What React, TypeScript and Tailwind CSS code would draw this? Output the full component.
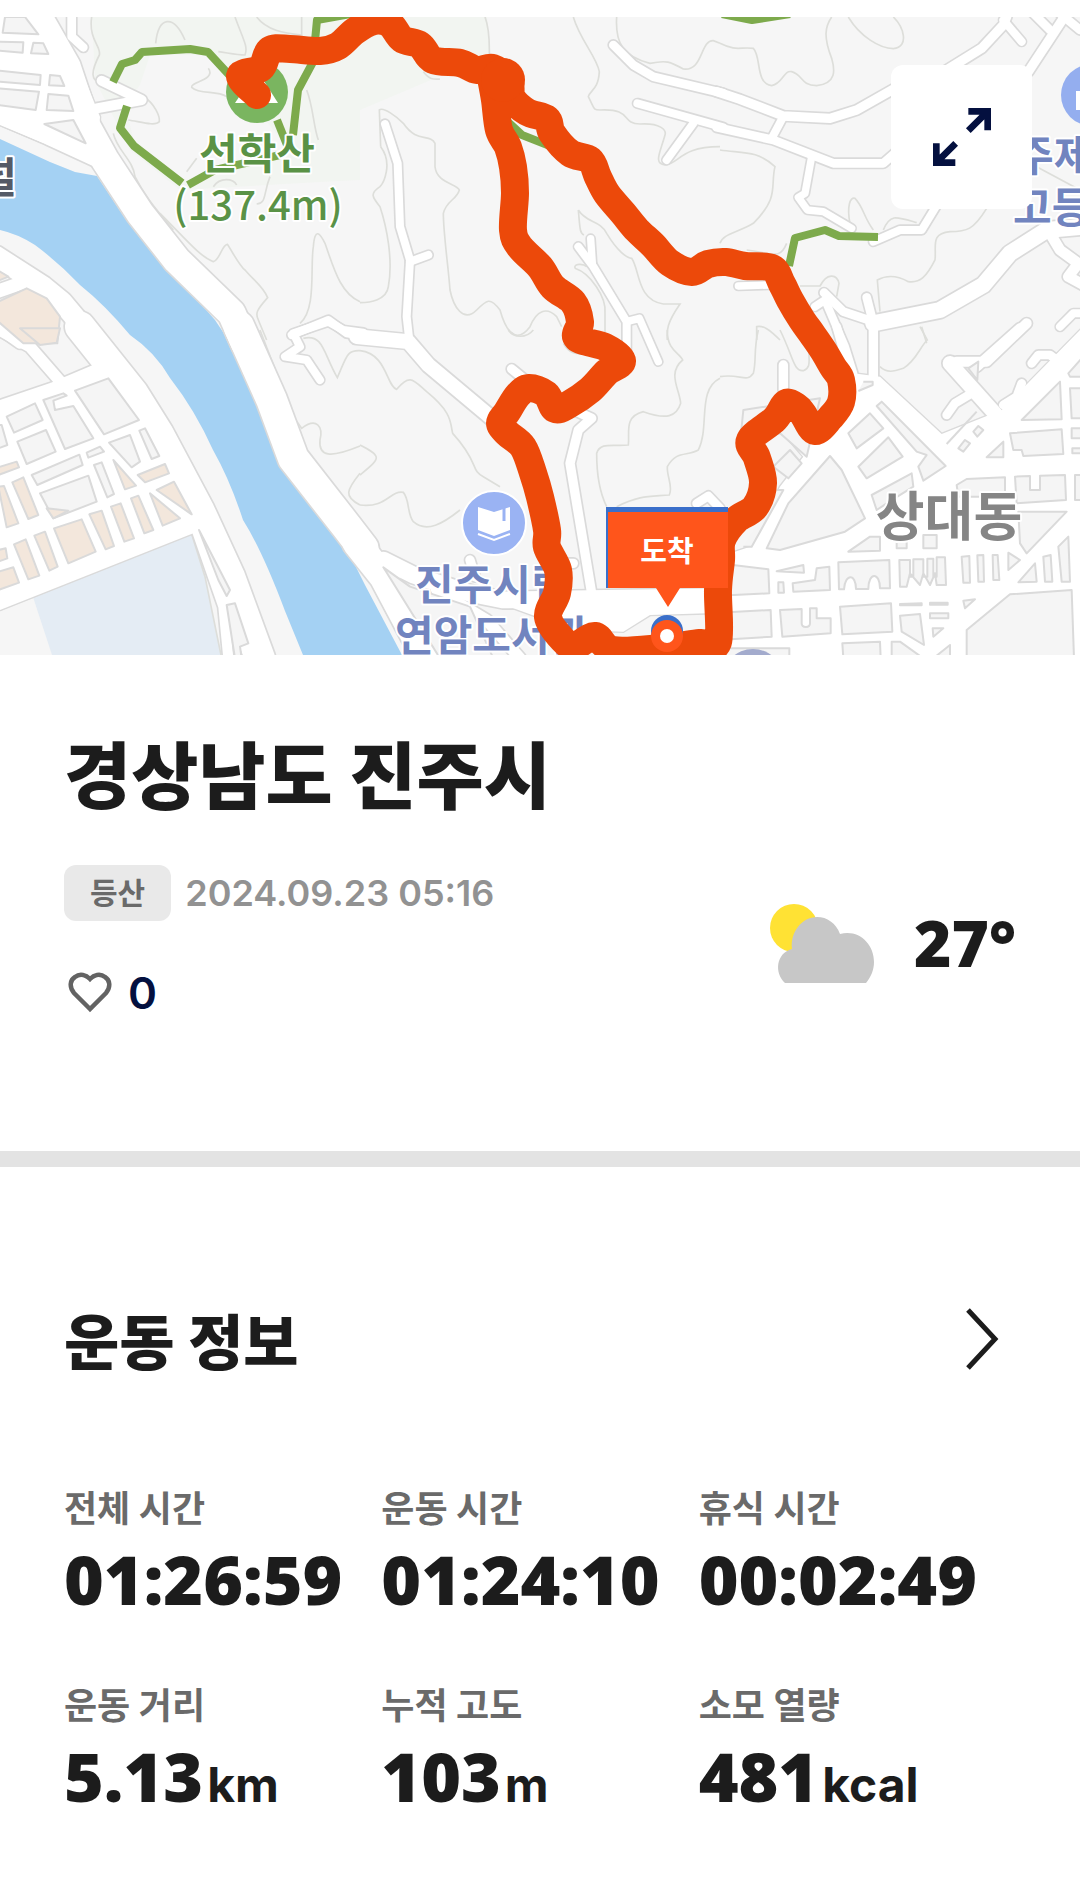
import React from 'react';

interface Road {
  d: string;
  w: number;
}

interface Tile {
  x: number;
  y: number;
  base?: string;
  roads: Road[];
  blocks: string[];
  shops: string[];
  contours: string[];
}

// Each tile is 360px wide on the map, with its own coordinates at three times that size
const tiles: Tile[] = [
  {
    x: 0,
    y: 0,
    base: 'M0 51H155L235 190L300 350L290 495L0 375Z',
    roads: [
      { d: 'M115 51L200 200L260 380L315 480L420 640L530 780L695 940L735 1030', w: 84 },
      { d: 'M0 335L150 400L290 465', w: 70 },
      { d: 'M290 325L425 300L305 242', w: 30 },
      { d: 'M215 40V110L250 142', w: 26 },
      { d: 'M-10 770L130 860L185 905L290 1030', w: 62 },
      { d: 'M-10 875L90 840', w: 40 },
      { d: 'M-10 980L60 1030', w: 32 },
      { d: 'M875 1005L985 960L1040 1000L1090 1008', w: 24 },
    ],
    blocks: [
      'M15 51H75L115 103L8 98Z',
      'M-5 125L70 127L68 158L-5 152Z',
      'M100 128L130 130L145 162L93 160Z',
      'M-5 212L122 225L120 255L-5 245Z',
      'M150 225L180 228L193 258L147 256Z',
      'M-5 265L117 275L107 330L-5 315Z',
      'M145 282L205 287L220 333L140 330Z',
      'M133 372L220 360L257 430Z',
    ],
    shops: ['M-5 905L80 865L140 895L180 950L172 1030H70L-5 965Z', 'M-5 812L25 830L-5 842Z'],
    contours: [
      'M275 51C265 120 305 140 298 165C270 220 275 240 300 250',
      'M467 130C475 50 520 40 555 120',
      'M705 51C730 120 745 140 735 165C710 165 680 158 655 155',
      'M770 51C800 90 850 100 905 105V51',
      'M625 205C650 240 570 245 575 262C600 285 650 270 680 290',
      'M430 290C465 310 480 350 478 365C465 380 420 365 385 360',
      'M340 400C350 450 400 480 405 530C440 600 480 640 520 690',
      'M480 640C560 720 600 770 640 785C660 780 665 735 682 733C700 760 720 800 735 810C760 840 790 860 803 893C770 930 765 940 775 960L800 1020',
      'M900 970C950 930 930 800 940 740C945 680 960 700 975 730C1000 800 1020 880 1080 905',
      'M560 515L590 475M640 560C660 530 700 535 710 555M770 612C800 610 790 580 810 530',
      'M920 270C940 320 940 380 955 420',
    ],
  },
  {
    x: 360,
    y: 0,
    roads: [
      { d: 'M75 372L113 490L120 680L150 780L140 950L150 1040', w: 24 },
      { d: 'M150 785L205 765', w: 24 },
      { d: 'M760 135L820 195L880 230L1090 280', w: 26 },
      { d: 'M832 310L1090 382', w: 24 },
      { d: 'M1000 370L920 480', w: 24 },
      { d: 'M655 740L700 800L800 965V1100', w: 24 },
      { d: 'M692 716L697 790', w: 22 },
      { d: 'M800 965L838 955L895 1085', w: 22 },
    ],
    blocks: [],
    shops: [],
    contours: [
      'M375 51C390 90 388 130 388 165',
      'M640 51C660 120 710 170 718 215C715 270 690 270 685 290C705 330 700 330 720 330C820 325 780 370 840 372C900 368 920 390 915 405C900 460 880 490 915 495C960 490 960 440 1080 440',
      'M770 51C765 130 790 170 870 190C920 180 930 185 970 207C1030 215 1020 120 1060 122L1080 130',
      'M62 440L58 330C70 320 110 350 130 370C170 430 210 400 225 430V500C230 550 290 550 298 570C290 600 260 600 250 640C250 700 265 800 270 870C280 920 310 970 350 930C380 900 390 890 420 930C445 1020 480 1020 510 980C530 930 560 920 590 950L605 980',
      'M62 440C100 490 70 550 60 560C30 580 35 590 60 620C80 680 100 780 85 860C80 900 30 908 0 908',
      'M655 630C660 690 660 700 672 705M655 630C680 670 720 660 740 700C770 750 800 775 815 775C840 810 830 900 910 912H960C920 970 920 990 922 1020',
      'M645 805C690 820 740 890 735 940V1000M645 805C640 790 670 790 680 800',
      'M190 215C210 240 220 238 240 237',
    ],
  },
  {
    x: 720,
    y: 0,
    roads: [
      { d: 'M-10 275L60 298L190 348L330 355L410 330L560 245', w: 28 },
      { d: 'M860 50L850 75L785 145L640 235', w: 28 },
      { d: 'M850 60L905 125', w: 24 },
      { d: 'M-10 382L160 420L340 490H490L570 420', w: 26 },
      { d: 'M190 350L155 415', w: 24 },
      { d: 'M275 470L255 580L235 592L262 630L310 635L395 685', w: 22 },
      { d: 'M460 725L540 690H605L660 600', w: 24 },
      { d: 'M1090 680L980 690L870 760L790 855L660 930L460 970', w: 48 },
      { d: 'M460 965L370 935L312 878', w: 26 },
      { d: 'M285 920L315 900L375 1040L400 1120', w: 24 },
      { d: 'M440 892L460 970V1130', w: 26 },
      { d: 'M1040 40L925 215', w: 28 },
      { d: 'M940 40L990 90', w: 26 },
      { d: 'M1020 40L1080 90', w: 26 },
      { d: 'M990 700L1020 750L1075 790L1045 830L1100 860', w: 32 },
      { d: 'M55 858L150 855', w: 22 },
      { d: 'M1085 940L1060 940L1020 980', w: 24 },
      { d: 'M900 985L770 1100', w: 30 },
    ],
    blocks: [],
    shops: [],
    contours: [
      'M0 130C50 155 60 140 100 145C125 170 105 250 155 257C190 250 190 210 215 215C250 225 240 255 290 257C350 250 345 210 335 175C310 110 315 80 335 51',
      'M385 51C420 110 480 145 520 146C570 140 550 80 520 51',
      'M0 450C70 460 110 450 165 500C150 560 180 590 100 670C50 700 10 700 0 730',
      'M390 670C380 620 390 590 405 595C430 620 430 650 460 690M490 690C510 640 530 650 590 668',
      'M800 625C760 690 740 695 690 695C630 700 650 740 645 780C620 830 600 850 565 845C520 820 490 830 472 840L480 935',
      'M240 858H300C320 820 350 820 357 850L350 890',
      'M110 1020V980C130 975 150 990 180 1020M605 980C620 1030 620 1030 620 1030',
      'M950 500L1080 570M80 750C160 760 180 780 200 730',
    ],
  },
  {
    x: 0,
    y: 330,
    base: 'M0 220L320 120L450 240L610 560L580 610L0 840Z',
    roads: [
      { d: 'M240 -10L400 190L475 310L600 545L690 740L780 985', w: 90 },
      { d: 'M-10 -5L90 50L190 165', w: 34 },
      { d: 'M-10 238L160 180L350 100', w: 46 },
      { d: 'M717 -10L815 210L880 385L1040 590L1090 655', w: 92 },
      { d: 'M590 600L670 830L685 985', w: 30 },
      { d: 'M1090 8L1030 0L985 -25L880 10L900 50L855 80L920 90L960 150', w: 24 },
    ],
    blocks: [
      'M20 260L105 220L128 270L42 308Z',
      'M-5 285H5L22 345L-5 355Z',
      'M52 335L138 300L167 365L80 402Z',
      'M130 210L190 190L200 197L160 212L165 240L220 228L280 325L195 357Z',
      'M225 182L325 145L417 270L312 313Z',
      'M327 338L390 315L420 395L395 412Z',
      'M418 302L435 295L478 378L455 387Z',
      'M95 435L238 374L248 405L112 465Z',
      'M260 368L300 350L312 365L265 383Z',
      'M282 405L305 397L342 492L322 502Z',
      'M120 490L265 437L290 515L160 565Z',
      'M597 600L690 780L680 798L655 750Z',
      'M680 825L705 820L745 940L720 950L725 985H705Z',
    ],
    shops: [
      'M60 -5H180L170 38L120 45Z',
      'M340 390L408 467L375 478Z',
      'M140 535L205 542L160 565Z',
      'M413 435L495 402L507 430L435 457Z',
      'M470 480L522 455L575 553Z',
      'M450 490L540 565L488 587Z',
      'M393 505L415 497L460 600L433 610Z',
      'M333 530L362 520L402 625L373 635Z',
      'M268 553L305 542L342 648L317 658Z',
      'M162 595L245 568L287 665L205 700Z',
      'M103 617L135 605L173 710L148 722Z',
      'M42 643L77 628L118 737L85 748Z',
      'M-5 660L17 655L22 685L-5 695Z',
      'M-5 725L40 712L57 758L-5 780Z',
      'M37 457L70 442L115 555L85 567Z',
      'M-5 470L12 468L55 580L20 592Z',
      'M-5 412L50 395L57 412L-5 435Z',
    ],
    contours: [
      'M780 0L880 260L905 295C950 260 970 290 960 330C955 380 990 385 1080 348',
      'M910 25C970 10 970 70 1012 143C1040 80 1040 60 1080 62',
      'M1080 430C1040 480 1030 500 1080 525',
      'M-5 842L575 612L615 740L665 985',
    ],
  },
  {
    x: 360,
    y: 330,
    base: 'M420 820L640 790H1040V850L870 855L790 905L640 900Z',
    roads: [
      { d: 'M-10 20L145 35L205 105L420 285', w: 44 },
      { d: 'M455 117L520 170', w: 28 },
      { d: 'M640 240L695 265L655 300L630 400L670 640L695 790', w: 28 },
      { d: 'M-10 640L70 740L200 985', w: 84 },
      { d: 'M70 690L160 735L330 790L430 810L1080 800', w: 50 },
      { d: 'M230 780L380 870L480 985', w: 34 },
      { d: 'M1010 520L1045 498L1080 535', w: 26 },
      { d: 'M330 690L345 740M640 700H600', w: 28 },
    ],
    blocks: ['M70 712L150 770L330 830L400 985H240L100 760Z'],
    shops: [],
    contours: [
      'M0 62C80 70 80 170 110 178C150 130 160 150 200 185C280 250 270 280 278 310C360 400 330 420 370 440L420 470',
      'M0 345C70 380 60 385 0 435M0 525C80 535 90 480 130 487C150 510 140 550 160 575C200 610 250 580 300 540',
      'M922 0C920 60 960 70 968 90C920 130 960 180 962 220C950 260 920 270 850 245C790 260 810 310 805 345C760 350 720 335 710 370C710 440 720 490 740 530',
      'M1080 145C1010 180 1050 290 1015 360C980 380 950 360 922 410C920 440 940 470 928 495C870 500 840 495 770 530',
      'M445 0C460 25 500 25 520 0M610 40C630 75 650 72 680 70',
    ],
  },
  {
    x: 720,
    y: 330,
    base: 'M400 130L480 140L665 312L845 240L1090 -10V985H0V680L90 650L180 470L250 380L190 310L400 190Z',
    roads: [
      { d: 'M460 -20V170', w: 28 },
      { d: 'M350 -10L395 150', w: 26 },
      { d: 'M190 105V180', w: 28 },
      { d: 'M690 100L860 290', w: 44 },
      { d: 'M710 95H800L920 -20', w: 30 },
      { d: 'M680 255L705 220L755 190', w: 26 },
      { d: 'M935 100L955 75H990L1010 90', w: 26 },
      { d: 'M905 160L890 200L850 225', w: 26 },
    ],
    blocks: [
      'M60 340L70 240L300 205L260 380L180 310Z',
      'M140 655L205 520L330 378L365 420L435 565L375 605L180 660Z',
      'M385 310L450 250L490 295L410 355Z',
      'M415 410L505 322L548 380L440 445Z',
      'M470 228L485 215L677 408L610 452L595 410L620 375L590 365Z',
      'M455 495L575 430L580 470L500 520L470 540Z',
      'M710 465L740 447L855 442V500H715Z',
      'M870 310L1025 298L1030 372L910 378L905 360H880Z',
      'M905 270L1020 155L1025 268Z',
      'M800 382L850 335V382Z',
      'M1045 130L1085 85V140H1050Z',
      'M1050 175H1085V265H1055Z',
      'M1055 295H1085V325H1055ZM1057 355H1085V370H1057Z',
      'M885 440L930 438V480H960V437L1035 435L1038 510L890 520Z',
      'M895 545L1040 545L920 670L900 640Z',
      'M1065 435H1085V510H1065Z',
      'M355 697L508 690L510 775H480C480 725 445 725 445 777H408C408 730 375 730 372 778H357Z',
      'M538 690H570V740H580V688H610V740H622V686H640V740H650V682H675L678 765H650L645 730L630 765L610 730L600 765L570 730L560 770H540Z',
      'M725 680L748 678L750 758H730Z',
      'M772 676L790 675L792 755H775Z',
      'M818 675H833L838 750H820Z',
      'M865 668L900 690L865 720Z',
      'M895 757L945 700L950 755Z',
      'M970 680L992 675L997 755H975Z',
      'M1015 650L1045 620L1050 755H1025Z',
      'M-5 700L145 718L148 790L-5 797Z',
      'M170 724L250 705L252 728Z',
      'M218 760L285 750L290 715L328 710L330 780L220 785Z',
      'M175 757H190L192 788H175Z',
      'M-5 848L152 840L155 920L-5 930Z',
      'M180 840L245 837V880C245 895 270 895 270 880V835H290V865H332V910L187 920Z',
      'M360 830L513 820L517 905L367 913Z',
      'M540 857L600 852L612 945L545 905Z',
      'M540 822L605 820V826H540ZM630 818H683V824H630Z',
      'M630 850H685V865H630Z',
      'M638 895H670L640 920Z',
      'M730 812L765 808L735 835Z',
      'M740 900L870 793L1055 780L1062 985H740Z',
      'M-5 955H208V985H-5Z',
      'M367 940L480 935L482 985H370Z',
      'M515 935H540L610 985H515Z',
      'M640 985L690 945V985Z',
      'M385 665L450 620H480V662Z',
      'M530 620H560V655H530ZM610 615H650V655H610Z',
      'M715 355L735 330L750 340L730 365Z',
      'M760 305L775 288L790 300L772 320Z',
      'M160 410L210 360L245 400L205 445Z',
      'M680 342L770 245',
      'M745 115L775 95L772 150Z',
      'M430 155H458V165L415 183',
      'M70 650H95L190 480H170',
    ],
    shops: [],
    contours: [
      'M0 140C60 130 80 160 100 130C110 90 100 60 115 0M180 0C220 80 220 125 250 122C280 110 260 80 270 50',
      'M480 110C500 130 520 125 550 115C590 90 600 50 622 30L600 -10',
    ],
  },
];

const route: number[][] = [
  [257, 95], [240, 76], [261, 68], [270, 50], [290, 49], [320, 51], [338, 46], [355, 31], [374, 21],
  [390, 24], [402, 39], [420, 45], [433, 60], [460, 63], [477, 70], [493, 68], [509, 80], [512, 98],
  [527, 112], [547, 119], [552, 133], [570, 153], [590, 160], [598, 177], [607, 194], [623, 213],
  [637, 230], [653, 245], [670, 263], [692, 272], [708, 264], [726, 262], [745, 266], [772, 268],
  [782, 284], [790, 300], [802, 320], [812, 334], [823, 350], [833, 367], [841, 380], [841, 402],
  [830, 418], [815, 431], [803, 414], [797, 407], [786, 403], [775, 419], [750, 440], [757, 458],
  [763, 483], [755, 507], [736, 520], [722, 540], [721, 560], [718, 590], [718, 642], [700, 643],
  [660, 648], [613, 650], [595, 636], [575, 646], [563, 640], [548, 617], [557, 593], [558, 570],
  [547, 547], [547, 530], [540, 497], [533, 473], [523, 447], [507, 433], [500, 423], [507, 412],
  [518, 395], [529, 388], [546, 394], [555, 409], [568, 405], [590, 390], [607, 372], [622, 361],
  [605, 347], [577, 338], [580, 322], [573, 302], [553, 287], [540, 267], [520, 247], [513, 230],
  [515, 193], [513, 167], [508, 147], [499, 130], [495, 100], [491, 78],
];

// Catmull-Rom spline through the recorded points
function toSmoothPath(points: number[][]) {
  let d = `M${points[0][0]} ${points[0][1]}`;
  for (let i = 0; i < points.length - 1; i++) {
    const p0 = points[i - 1] ?? points[i];
    const p1 = points[i];
    const p2 = points[i + 1];
    const p3 = points[i + 2] ?? p2;
    const c1 = [p1[0] + (p2[0] - p0[0]) / 6, p1[1] + (p2[1] - p0[1]) / 6];
    const c2 = [p2[0] - (p3[0] - p1[0]) / 6, p2[1] - (p3[1] - p1[1]) / 6];
    d += `C${c1[0].toFixed(1)} ${c1[1].toFixed(1)} ${c2[0].toFixed(1)} ${c2[1].toFixed(1)} ${p2[0]} ${p2[1]}`;
  }
  return d;
}

const trails = [
  'M113 82L122 64L135 60L142 52L190 49L208 52L232 78',
  'M127 106L120 128L134 146L182 183',
  'M188 185L215 170L280 155',
  'M277 120L287 145',
  'M293 135L298 90L313 62L317 20L362 12',
  'M508 122L522 135L550 146',
  'M789 266L795 238L825 230L839 236L878 237',
  'M722 14L752 20L790 14',
];

function TileGroup({ tile, children }: { tile: Tile; children: React.ReactNode }) {
  return <g transform={`translate(${tile.x} ${tile.y}) scale(0.33333)`}>{children}</g>;
}

function RouteMap() {
  return (
    <svg
      viewBox="0 17 1080 638"
      className="block h-auto w-full bg-[#f6f6f6] font-['Noto_Sans_CJK_KR',sans-serif]"
      role="img"
      aria-label="이동 경로 지도"
    >
      {/* Forest, river, school ground */}
      <path d="M92 17H487L490 55L360 110V180L320 182L180 190L130 150L95 80Z" fill="#f2f5f1" />
      <path d="M150 55H210L232 80L290 150L190 184L135 145L125 105L140 85Z" fill="#f6f6f6" />
      <path
        d="M0 139L50 162L75 172L97 176L125 218L180 280L215 320L225 335L258 405L280 463L345 545L365 585L402 655H303L285 611Q262 550 243 520Q230 480 213 450Q195 410 170 378Q155 352 130 335Q105 305 80 285Q58 262 35 245Q18 234 0 230Z"
        fill="#a4d1f3"
      />
      <path d="M33 597L192 534L205 577L221 655H52Z" fill="#e4ecf4" />

      <g fill="none" stroke="#dddeda" strokeWidth="5">
        {tiles.map((tile, i) => (
          <TileGroup key={i} tile={tile}>
            {tile.contours.map((d) => <path key={d} d={d} />)}
          </TileGroup>
        ))}
      </g>
      <g fill="none" stroke="#dadada" strokeLinecap="round" strokeLinejoin="round">
        {tiles.map((tile, i) => (
          <TileGroup key={i} tile={tile}>
            {tile.base && <path d={tile.base} strokeWidth="8" />}
            {tile.roads.map((road) => <path key={road.d} d={road.d} strokeWidth={road.w + 10} />)}
          </TileGroup>
        ))}
      </g>
      <g fill="none" stroke="#fff" strokeLinecap="round" strokeLinejoin="round">
        {tiles.map((tile, i) => (
          <TileGroup key={i} tile={tile}>
            {tile.base && <path d={tile.base} fill="#fff" stroke="none" />}
            {tile.roads.map((road) => <path key={road.d} d={road.d} strokeWidth={road.w} />)}
          </TileGroup>
        ))}
      </g>
      <g stroke="#dadada" strokeWidth="6" strokeLinejoin="round">
        {tiles.map((tile, i) => (
          <TileGroup key={i} tile={tile}>
            {tile.blocks.map((d) => <path key={d} d={d} fill="#f5f5f5" />)}
            {tile.shops.map((d) => <path key={d} d={d} fill="#f3e7dc" />)}
          </TileGroup>
        ))}
      </g>

      <g fill="none" stroke="#7daa4c" strokeWidth="8" strokeLinejoin="round">
        {trails.map((d) => <path key={d} d={d} />)}
      </g>

      {/* Places */}
      <circle cx="257" cy="92" r="31" fill="#7ab560" />
      <path d="M257 70L278 103H235Z" fill="#fff" />
      <circle cx="494" cy="523" r="32" fill="#9ab3f3" stroke="#fff" strokeWidth="2" />
      <path d="M478 507L494 512L510 507V530L494 536L478 530Z" fill="#fff" />
      <path d="M504 507V521" stroke="#9ab3f3" strokeWidth="3" />
      <path d="M478 534L494 540L510 534" fill="none" stroke="#fff" strokeWidth="2" />
      <circle cx="1092" cy="95" r="31" fill="#94aeef" />
      <path d="M1076 91H1080V110H1076Z" fill="#fff" />
      <circle cx="753" cy="680" r="31" fill="#a3abcd" />

      <g stroke="#fff" strokeWidth="4" strokeLinejoin="round" paintOrder="stroke" fontWeight="700" fontSize="42">
        <g fill="#5a9246" textAnchor="middle">
          <text x="257" y="169">선학산</text>
          <text x="258" y="220" fontSize="40" fontWeight="500">(137.4m)</text>
        </g>
        <g fill="#7184bf">
          <text x="415" y="600">진주시립</text>
          <text x="395" y="651">연암도서관</text>
          <text x="1015" y="171">주제</text>
          <text x="1013" y="223">고등</text>
        </g>
        <text x="17" y="193" textAnchor="end" fill="#555a66">널</text>
        <text x="949" y="536" textAnchor="middle" fontSize="53" fill="#858585">상대동</text>
      </g>

      <path
        d={toSmoothPath(route)}
        fill="none"
        stroke="#ec490a"
        strokeWidth="28"
        strokeLinecap="round"
        strokeLinejoin="round"
      />
      <circle cx="503" cy="80" r="22" fill="#ec490a" />

      {/* Arrival marker */}
      <path d="M606 507H728V512H608V588H606Z" fill="#3a6fca" />
      <path d="M608 512H728V588H680L668 607L656 588H608Z" fill="#ff551b" />
      <text x="667" y="562" textAnchor="middle" fontSize="29" fontWeight="700" fill="#fff">도착</text>
      <circle cx="667" cy="631" r="16" fill="#3a6fca" />
      <circle cx="667" cy="636" r="16" fill="#ff551b" />
      <circle cx="667" cy="636" r="7" fill="#fff" />
    </svg>
  );
}

function ExpandIcon() {
  return (
    <svg viewBox="0 0 174 174" className="size-[58px]" fill="none" stroke="#04103f" strokeWidth="20" aria-hidden="true">
      <path d="M106 10H164V67M164 10L106 68" />
      <path d="M10 106V164H67M10 164L68 106" />
    </svg>
  );
}

function HeartIcon() {
  return (
    <svg viewBox="0 0 44 42" className="h-[42px] w-11" fill="none" stroke="#636363" strokeWidth="4.5" aria-hidden="true">
      <path d="M22 37L6 21C1 15 2 8 7 5C12 1 18 3 22 7C26 3 32 1 37 5C42 8 43 15 38 21Z" />
    </svg>
  );
}

function CloudIcon() {
  return (
    <svg viewBox="0 0 104 79" className="h-[79px] w-[104px]" role="img" aria-label="구름 조금">
      <circle cx="24" cy="24" r="24" fill="#ffe234" />
      <path
        d="M15 79C4 69 6 49 22 45C20 28 32 13 47 13C57 13 66 19 70 30C89 25 104 40 104 58C104 66 101 73 96 79Z"
        fill="#c7c7c7"
      />
    </svg>
  );
}

const stats = [
  { label: '전체 시간', value: '01:26:59' },
  { label: '운동 시간', value: '01:24:10' },
  { label: '휴식 시간', value: '00:02:49' },
  { label: '운동 거리', value: '5.13', unit: 'km' },
  { label: '누적 고도', value: '103', unit: 'm' },
  { label: '소모 열량', value: '481', unit: 'kcal' },
];

export default function App() {
  return (
    <main className="min-h-screen bg-white pt-[17px] font-['Inter','Noto_Sans_CJK_KR',sans-serif] text-[#1c1c1c]">
      <div className="relative">
        <RouteMap />
        <button
          aria-label="지도 확대"
          className="absolute top-12 right-12 flex h-36 w-[141px] items-center justify-center rounded-xl bg-white"
        >
          <ExpandIcon />
        </button>
      </div>

      <section className="px-16 pt-[76px] pb-[130px]">
        <h1 className="font-['Noto_Sans_CJK_KR',sans-serif] text-[73px] leading-[80px] font-black">경상남도 진주시</h1>
        <div className="mt-[54px] flex items-center justify-between">
          <div className="flex flex-col gap-11">
            <div className="flex items-center gap-[14px]">
              <span className="flex h-14 items-center rounded-xl bg-[#e9e9e9] px-[26px] text-[30px] font-bold text-[#6a6a6a]">
                등산
              </span>
              <time className="text-4xl font-semibold text-[#929292]">2024.09.23 05:16</time>
            </div>
            <button className="flex h-14 items-center gap-4 self-start pl-1" aria-label="좋아요 0">
              <HeartIcon />
              <span className="text-[44px] leading-[56px] font-semibold text-[#04103f]">0</span>
            </button>
          </div>
          <div className="flex items-center gap-10">
            <CloudIcon />
            <span className="font-['Open_Sans',sans-serif] text-[64px] leading-[80px] font-extrabold">27°</span>
          </div>
        </div>
      </section>

      <div className="h-4 bg-[#e3e3e3]" />

      <section className="px-16 pt-[140px] pb-[62px]">
        <div className="flex items-center justify-between">
          <h2 className="font-['Noto_Sans_CJK_KR',sans-serif] text-6xl leading-[64px] font-black">운동 정보</h2>
          <button aria-label="운동 정보 더보기" className="mr-4">
            <svg viewBox="0 0 34 64" className="h-16 w-[34px]" fill="none" stroke="#1c1c1c" strokeWidth="5" aria-hidden="true">
              <path d="M2 3L29 32L2 61" />
            </svg>
          </button>
        </div>
        <dl className="mt-[118px] grid grid-cols-3 gap-y-[71px]">
          {stats.map((stat) => (
            <div key={stat.label}>
              <dt className="text-4xl leading-10 font-bold text-[#6a6a6a]">{stat.label}</dt>
              <dd className="mt-[14px] flex items-baseline gap-1 leading-[72px] whitespace-nowrap">
                <span className="font-['Open_Sans',sans-serif] text-[68px] font-extrabold">{stat.value}</span>
                {stat.unit && <span className="text-5xl leading-[72px] font-bold">{stat.unit}</span>}
              </dd>
            </div>
          ))}
        </dl>
      </section>
    </main>
  );
}
